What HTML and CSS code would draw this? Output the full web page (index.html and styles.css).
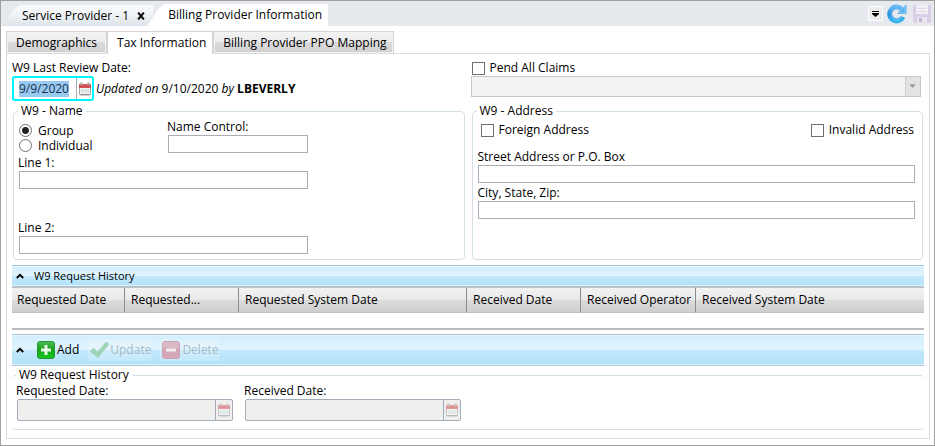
FILE: index.html
```html
<!DOCTYPE html>
<html lang="en">
<head>
<meta charset="utf-8">
<title>Billing Provider Information</title>
<link rel="stylesheet" href="styles.css">
</head>
<body>
<svg class="defs" aria-hidden="true">
  <symbol id="calendar" viewBox="0 0 14 14">
    <path d="M1.5 3.5h11v8.5a1 1 0 0 1-1 1h-9a1 1 0 0 1-1-1z" fill="#f4f6f6" stroke="#a5a2a2"/>
    <path d="M1 2h12v4H1z" fill="#d8575a"/>
    <path d="M1 4.500h12" stroke="#c74448"/>
    <path d="M3.500 0.500v3M10.500 0.500v3" stroke="#a3a0a0" stroke-width="2"/>
    <path d="M3 7.500h8v3H3z" fill="#c8d6d5"/>
    <path d="M4 9h1.500M6.300 9h1.500M8.600 9h1.500" stroke="#fff"/>
    <path d="M2 12.500h10" stroke="#918e8e"/>
  </symbol>
</svg>
<div class="window">
  <header class="strip">
    <nav class="doc-tabs">
      <div class="doc-tab"><button type="button">Service Provider - 1</button><button type="button" class="close" aria-label="Close"><svg viewBox="0 0 7 7"><path d="M1 .5l5 6M6 .5l-5 6" stroke="#111" stroke-width="1.800"/></svg></button></div>
      <div class="doc-tab current"><button type="button">Billing Provider Information</button></div>
    </nav>
    <div class="tools">
      <button type="button" class="overflow" aria-label="More"><svg viewBox="0 0 13 13"><path d="M3 4.500h7" stroke="#000"/><path d="M3 6h7v1L6.500 10 3 7z" fill="#000"/></svg></button>
      <button type="button" class="tool" aria-label="Refresh"><svg viewBox="0 0 20 20">
        <defs><linearGradient id="blue" x2="0" y2="1"><stop offset="0" stop-color="#68b9f3"/><stop offset=".5" stop-color="#2b91e2"/><stop offset="1" stop-color="#35b5f2"/></linearGradient></defs>
        <path d="M16 13A7 7 0 1 1 14.500 4.800" fill="none" stroke="url(#blue)" stroke-width="5"/>
        <path d="M19.500.5v9.500H10L13 6.500z" fill="#5db3ef"/>
        <path d="M15 12.500a5.500 5.500 0 1 1-1.500-6M11.500 9H18V2.500" fill="none" stroke="#b5e0fb" stroke-width="1" opacity=".5"/>
      </svg></button>
      <button type="button" class="tool" aria-label="Save" disabled><svg viewBox="0 0 20 20">
        <path d="M2 1h16a1 1 0 0 1 1 1v16a1 1 0 0 1-1 1H3l-2-2V2a1 1 0 0 1 1-1z" fill="#d9cee5"/>
        <path d="M4 1h12v9H4z" fill="#f0eff5"/><path d="M5.500 4.500h9M5.500 7.500h9" stroke="#ded9e8"/>
        <path d="M5 13h10v6H5z" fill="#e8e6ee"/><path d="M7 14h3v4H7z" fill="#c4b6d4"/>
      </svg></button>
    </div>
  </header>

  <main>
    <nav class="tabs">
      <button type="button">Demographics</button>
      <button type="button" class="current">Tax Information</button>
      <button type="button">Billing Provider PPO Mapping</button>
    </nav>
    <div class="panel">
      <div class="columns">
        <div>
          <label for="review">W9 Last Review Date:</label>
          <div class="review">
            <div class="date focus"><input id="review" type="text" value="9/9/2020"><button type="button" aria-label="Pick review date"><svg><use href="#calendar"/></svg></button></div>
            <span><i>Updated on</i> 9/10/2020 <i>by</i> <b>LBEVERLY</b></span>
          </div>
        </div>
        <div class="pend">
          <label class="check"><input type="checkbox">Pend All Claims</label>
          <div class="combo"><select aria-label="Pend reason" disabled><option></option></select><svg viewBox="0 0 15 19"><path d="M4 7h6v1L7 11 4 8z" fill="#9b9b9b"/></svg></div>
        </div>
        <fieldset>
          <legend>W9 - Name</legend>
          <div class="pair">
            <div class="radios">
              <label><input type="radio" name="kind" checked>Group</label>
              <label><input type="radio" name="kind">Individual</label>
            </div>
            <div class="field control"><label for="control">Name Control:</label><input id="control" type="text"></div>
          </div>
          <div class="field line"><label for="line1">Line 1:</label><input id="line1" type="text"></div>
          <div class="field line second"><label for="line2">Line 2:</label><input id="line2" type="text"></div>
        </fieldset>
        <fieldset class="address">
          <legend>W9 - Address</legend>
          <div class="checks">
            <label class="check"><input type="checkbox">Foreign Address</label>
            <label class="check"><input type="checkbox">Invalid Address</label>
          </div>
          <div class="field"><label for="street">Street Address or P.O. Box</label><input id="street" type="text"></div>
          <div class="field"><label for="city">City, State, Zip:</label><input id="city" type="text"></div>
        </fieldset>
      </div>

      <section class="history">
        <div class="bar">
          <button type="button" class="fold" aria-label="Collapse history"><svg viewBox="0 0 8 6"><path d="M.8 5L4 1.800 7.200 5" fill="none" stroke="#000" stroke-width="1.900"/></svg></button>
          <h2>W9 Request History</h2>
        </div>
        <table>
          <colgroup><col class="c1"><col class="c2"><col class="c3"><col class="c4"><col class="c5"><col></colgroup>
          <thead><tr><th>Requested Date</th><th>Requested...</th><th>Requested System Date</th><th>Received Date</th><th>Received Operator</th><th>Received System Date</th></tr></thead>
          <tbody><tr><td colspan="6"></td></tr></tbody>
        </table>
      </section>

      <section>
        <div class="bar actions">
          <button type="button" class="fold" aria-label="Collapse editor"><svg viewBox="0 0 8 6"><path d="M.8 5L4 1.800 7.200 5" fill="none" stroke="#000" stroke-width="1.900"/></svg></button>
          <button type="button" class="action"><svg viewBox="0 0 20 20">
            <defs><linearGradient id="green" x2="0" y2="1"><stop offset="0" stop-color="#55b95c"/><stop offset=".45" stop-color="#16a51c"/><stop offset="1" stop-color="#12c51b"/></linearGradient></defs>
            <rect x="1.500" y="1.500" width="17" height="17" rx="2.500" fill="url(#green)" stroke="#219a2b"/>
            <path d="M10 5v10M5 10h10" stroke="#e9f9ea" stroke-width="3"/></svg>Add</button>
          <button type="button" class="action" disabled><svg viewBox="0 0 20 20"><path d="M1 11l4-3 3.500 4L17 2l3 2L9 18z" fill="#9bd3b4" stroke="#b3dcc8" stroke-width=".8"/></svg>Update</button>
          <button type="button" class="action" disabled><svg viewBox="0 0 20 20"><rect x="1.500" y="1.500" width="17" height="17" rx="2.500" fill="#d3a7b8" stroke="#cda0b2"/><path d="M2 2h16v6H2z" fill="#dbbac8"/><path d="M5 10h10" stroke="#f4eef3" stroke-width="3"/></svg>Delete</button>
        </div>
        <fieldset class="request" disabled>
          <legend>W9 Request History</legend>
          <div><label for="requested">Requested Date:</label>
            <div class="date"><input id="requested" type="text"><button type="button" aria-label="Pick requested date"><svg><use href="#calendar"/></svg></button></div></div>
          <div><label for="received">Received Date:</label>
            <div class="date"><input id="received" type="text"><button type="button" aria-label="Pick received date"><svg><use href="#calendar"/></svg></button></div></div>
        </fieldset>
      </section>
    </div>
  </main>
</div>
<script src="script.js"></script>
</body>
</html>
```
FILE: styles.css
```css
* { box-sizing: border-box; }
body {
  margin: 0;
  background: #fff;
  color: #000;
  font: 12px/16px "Segoe UI", "Open Sans", "Noto Sans", sans-serif;
}
button, input, select { font: inherit; color: inherit; }
button { margin: 0; padding: 0; border: 0; background: none; white-space: nowrap; }
svg { display: block; }
.defs { position: absolute; width: 0; height: 0; }
.window { min-height: 100vh; border: 1px solid #a0a0a0; display: flex; flex-direction: column; }

/* Document tabs */
.strip { display: flex; justify-content: space-between; height: 25px; background: #e6e9ee; }
.doc-tabs { display: flex; align-items: flex-end; }
.doc-tab {
  display: flex;
  align-items: center;
  gap: 8px;
  height: 21px;
  padding: 0 8px 0 20px;
  margin-left: 1px;
  background: linear-gradient(#fafbfc, #f0f3f6 45%, #dce3ea);
  clip-path: polygon(0 100%, 12px 4px, 18px 0, 100% 0, 100% 100%);
}
.doc-tab.current { height: 22px; margin-left: -6px; padding: 0 6px 0 21px; background: #fff; }
.close svg { width: 8px; height: 8px; }
.tools { display: flex; align-items: center; gap: 5px; padding-right: 2px; }
.overflow { width: 13px; height: 13px; background: #ececec; outline: 1px solid #fff; }
.overflow svg { width: 13px; height: 13px; }
.tool svg { width: 20px; height: 20px; }

/* Page tabs */
main { flex: 1; display: flex; flex-direction: column; padding: 5px 4px 6px 5px; }
.tabs { display: flex; align-items: flex-end; }
.tabs button {
  height: 22px;
  padding: 0 6px 0 9px;
  border: 1px solid #d4d4d4;
  border-bottom: 0;
  background: linear-gradient(#f3f3f3, #ebebeb 50%, #dcdcdc 50%, #cfcfcf);
  box-shadow: inset 0 0 0 1px #f3f3f3;
}
.tabs button:first-child { padding-right: 9px; }
.tabs .current { height: 23px; margin-bottom: -1px; background: #fff; box-shadow: none; z-index: 1; }
.panel { flex: 1; padding: 6px 5px 8px; border: 1px solid #dadbdc; }

/* Form */
.columns { display: grid; grid-template-columns: 1fr 1fr; gap: 2px 7px; padding: 0 1px 5px; }
label { display: block; white-space: nowrap; }
.columns > div:first-child { margin-left: -1px; }
.review { display: flex; align-items: center; gap: 2px; }
.date { display: flex; height: 22px; width: 216px; border: 1px solid #a3adb9; border-radius: 2px; background: #efefef; }
.date input { flex: 1; min-width: 0; padding: 0 5px; border: 0; background: transparent; outline: 0; }
.date button { display: grid; place-items: center; width: 17px; border-left: 1px solid #a3adb9; }
.date svg { width: 14px; height: 14px; }
.request svg { opacity: .55; }
.date.focus { width: 82px; height: 25px; border: 2px solid #00f4fa; border-radius: 3px; background: #fff; }
.date.focus button { width: 16px; }
.date ::selection { background: #99c9ef; color: #16324f; }
.check { display: flex; align-items: center; gap: 5px; }
input[type="checkbox"], input[type="radio"] { appearance: none; margin: 0; width: 13px; height: 13px; border: 1px solid #707070; background: #fff; }
input[type="radio"] { border-radius: 50%; }
input[type="radio"]:checked { background: radial-gradient(circle, #222 3px, #fff 4px); }
.pend { padding-right: 2px; }
.pend .check { margin-left: 1px; }
.combo { display: flex; height: 21px; border: 1px solid #c2c8d0; background: #f3f3f3; }
.combo select { flex: 1; min-width: 0; border: 0; appearance: none; background: transparent; }
.combo svg { width: 15px; height: 19px; border-left: 1px solid #d0d0d0; background: #e3e3e3; }
.columns > div { min-width: 0; }
.columns .pend { margin-left: -1px; }

fieldset { min-width: 0; margin: 0; padding: 0 8px 5px 5px; border: 1px solid #d3dfe7; border-radius: 4px; }
legend { margin-left: -1px; padding: 0 3px; }
.field input { display: block; width: 100%; height: 18px; padding: 0 3px; border: 1px solid #abadb3; background: #fff; }
.pair { display: flex; justify-content: space-between; width: 289px; }
.radios { padding-top: 4px; line-height: 15px; }
.radios label { display: flex; align-items: center; gap: 6px; height: 15px; }
.control { width: 140px; }
.field label { margin-left: -1px; }
.line { width: 289px; padding-top: 2px; }
.second { padding-top: 31px; }
.checks { display: flex; justify-content: space-between; padding: 3px 1px 11px 3px; }
.address { padding-right: 7px; }
.address .field label { margin-left: 0; }
.address .field + .field { padding-top: 2px; }

/* History */
.bar {
  display: flex;
  align-items: center;
  height: 22px;
  padding-left: 4px;
  border: solid #a9c5d8;
  border-width: 1px 0;
  background: linear-gradient(#d2eefd, #e0f4fe 48%, #c4e9fc 50%, #b1e1f9);
  box-shadow: inset 0 1px #e9f7fe, inset 0 -1px #e0f3fc;
}
.fold { width: 8px; }
.fold svg { width: 8px; height: 6px; }
h2 { margin: 0 0 0 10px; font-size: 11px; font-weight: 400; }
.history { padding-bottom: 4px; }
table { width: 100%; table-layout: fixed; border-collapse: separate; border-spacing: 0; }
.c1 { width: 112px; }
.c2, .c4 { width: 114px; }
.c3 { width: 228px; }
.c5 { width: 115px; }
th {
  height: 26px;
  padding: 0 0 0 6px;
  border: solid #c2c2c2;
  border-width: 1px 0;
  background: linear-gradient(#f2f2f2, #e9e9e9 50%, #dcdcdc 50%, #cecece);
  font-weight: 400;
  text-align: left;
  white-space: nowrap;
}
th:first-child { padding-left: 5px; }
th + th { border-left: 1px solid #8c8c8c; }
td { height: 17px; padding: 0; border-bottom: 2px solid #bbbcbf; }
.actions { height: 32px; gap: 9px; }
.actions .fold { margin-right: 2px; }
.action { display: flex; align-items: center; gap: 1px; height: 22px; padding: 0 0 0 1px; }
.action svg { width: 20px; height: 20px; }
.action:disabled { color: #a5b8c5; background: #ffffff33; }
.request { display: flex; gap: 12px; margin-top: 1px; padding: 0 5px 8px; border-width: 1px 0; }
.request label { margin-left: -1px; }
```
FILE: script.js
```js
// Start with the review date selected, ready to be typed over.
const review = document.getElementById("review");
review.focus();
review.select();
```
